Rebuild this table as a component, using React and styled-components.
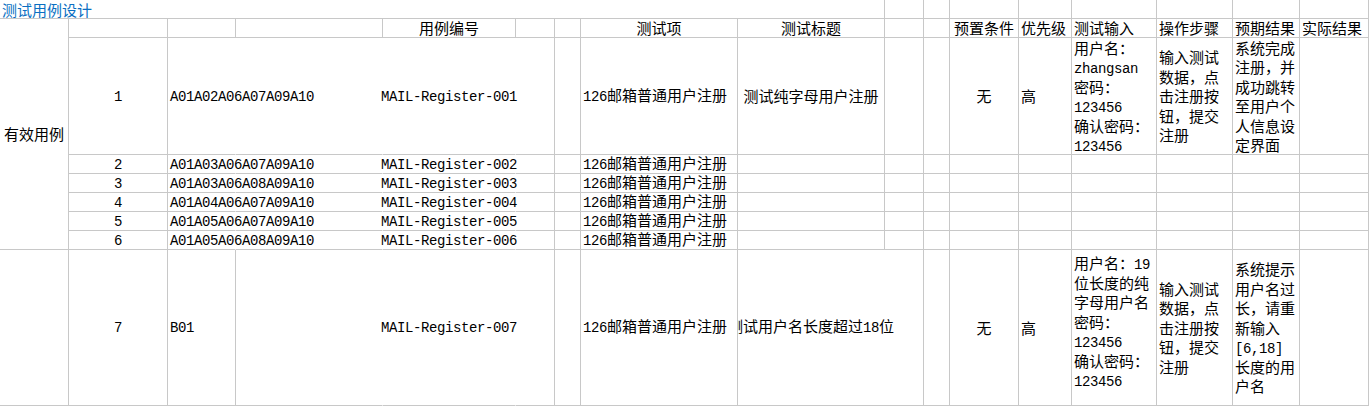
import React from "react";
import styled, { createGlobalStyle } from "styled-components";

const GRID = "#c8c8c8";
const LEFT_W = 69;
// widths of the sheet columns right of the label column, border included
const COLS = [99, 68, 147, 133, 39, 26, 157, 147, 39, 26, 69, 53, 85, 76, 67, 69];

const GlobalStyle = createGlobalStyle`
    body {
        margin: 0;
        background: #ffffff;
        color: #000000;
        font-family: "Noto Sans CJK SC", "Noto Sans", sans-serif;
        font-size: 15px;
    }
`;

const Sheet = styled.div`
    width: 1371px;
    height: 407px;
    overflow: hidden;
`;

const Row = styled.div`
    display: flex;
    height: ${({ $h }) => $h}px;
`;

const Body = styled.div`
    display: flex;
`;

const LabelColumn = styled.div`
    display: flex;
    flex-direction: column;
    width: ${LEFT_W}px;
`;

const Rows = styled.div`
    display: flex;
    flex-direction: column;
`;

const Cell = styled.div`
    box-sizing: border-box;
    flex: none;
    width: ${({ $w }) => $w}px;
    height: ${({ $h }) => ($h ? `${$h}px` : "100%")};
    display: flex;
    align-items: center;
    justify-content: ${({ $center }) => ($center ? "center" : "flex-start")};
    padding: 0 ${({ $pr }) => $pr || 0}px 0
        ${({ $center }) => ($center ? 0 : 2)}px;
    border-right: 1px solid ${({ $open }) => ($open ? "transparent" : GRID)};
    border-bottom: 1px solid ${GRID};
    overflow: ${({ $clip }) => ($clip ? "hidden" : "visible")};
    white-space: nowrap;
    line-height: 19.5px;
`;

const TitleText = styled.span`
    color: #0a6fc2;
    padding-top: 1px;
`;

const Text = styled.span`
    white-space: nowrap;
`;

const Latin = styled.span`
    font-family: "Liberation Mono", "DejaVu Sans Mono", monospace;
    font-size: 14px;
    letter-spacing: -0.4px;
`;

const Lines = styled.div`
    display: flex;
    flex-direction: column;
`;

const Line = styled.div`
    height: 19.5px;
    white-space: nowrap;
`;

const ASCII = /^[\x20-\x7e]+$/;

const T = ({ children }) => (
    <Text>
        {String(children)
            .split(/([\x20-\x7e]+)/)
            .filter(Boolean)
            .map((part, i) =>
                ASCII.test(part) ? (
                    <Latin key={i}>{part}</Latin>
                ) : (
                    <span key={i}>{part}</span>
                )
            )}
    </Text>
);

const Multi = ({ lines }) => (
    <Lines>
        {lines.map((l, i) => (
            <Line key={i}>
                <T>{l}</T>
            </Line>
        ))}
    </Lines>
);

const headers = [
    { t: "" },
    { t: "" },
    { t: "" },
    { t: "用例编号", center: true },
    { t: "" },
    { t: "" },
    { t: "测试项", center: true },
    { t: "测试标题", center: true },
    { t: "" },
    { t: "" },
    { t: "预置条件", center: true },
    { t: "优先级" },
    { t: "测试输入" },
    { t: "操作步骤" },
    { t: "预期结果" },
    { t: "实际结果" },
];

const ITEM = "126邮箱普通用户注册";
const STEPS = ["输入测试", "数据，点", "击注册按", "钮，提交", "注册"];

const cases = [
    {
        h: 117,
        no: "1",
        code: "A01A02A06A07A09A10",
        id: "MAIL-Register-001",
        title: "测试纯字母用户注册",
        pre: "无",
        pri: "高",
        input: ["用户名：", "zhangsan", "密码：", "123456", "确认密码：", "123456"],
        steps: STEPS,
        expect: ["系统完成", "注册，并", "成功跳转", "至用户个", "人信息设", "定界面"],
    },
    { h: 19, no: "2", code: "A01A03A06A07A09A10", id: "MAIL-Register-002" },
    { h: 19, no: "3", code: "A01A03A06A08A09A10", id: "MAIL-Register-003" },
    { h: 19, no: "4", code: "A01A04A06A07A09A10", id: "MAIL-Register-004" },
    { h: 19, no: "5", code: "A01A05A06A07A09A10", id: "MAIL-Register-005" },
    { h: 19, no: "6", code: "A01A05A06A08A09A10", id: "MAIL-Register-006" },
    {
        h: 156,
        no: "7",
        code: "B01",
        id: "MAIL-Register-007",
        title: "测试用户名长度超过18位",
        wideTitle: true,
        pre: "无",
        pri: "高",
        input: ["用户名：19", "位长度的纯", "字母用户名", "密码：", "123456", "确认密码：", "123456"],
        inputShift: -6,
        steps: STEPS,
        expect: ["系统提示", "用户名过", "长，请重", "新输入", "[6,18]", "长度的用", "户名"],
    },
];

const Shifted = styled.div`
    transform: translateY(${({ $dy }) => $dy || 0}px);
`;

const CaseRow = ({ c }) => (
    <Row $h={c.h}>
        <Cell $w={COLS[0]} $center>
            <T>{c.no}</T>
        </Cell>
        <Cell $w={COLS[1]} $open={c.code.length > 8}>
            <T>{c.code}</T>
        </Cell>
        <Cell $w={COLS[2]} $open />
        <Cell $w={COLS[3]} $center $open>
            <T>{c.id}</T>
        </Cell>
        <Cell $w={COLS[4]} />
        <Cell $w={COLS[5]} />
        <Cell $w={COLS[6]}>
            <T>{ITEM}</T>
        </Cell>
        {c.wideTitle ? (
            <Cell $w={COLS[7] + COLS[8]} $pr={COLS[8]} $center $clip>
                <T>{c.title}</T>
            </Cell>
        ) : (
            <>
                <Cell $w={COLS[7]} $center>
                    {c.title && <T>{c.title}</T>}
                </Cell>
                <Cell $w={COLS[8]} />
            </>
        )}
        <Cell $w={COLS[9]} />
        <Cell $w={COLS[10]} $center>
            {c.pre && <T>{c.pre}</T>}
        </Cell>
        <Cell $w={COLS[11]}>{c.pri && <T>{c.pri}</T>}</Cell>
        <Cell $w={COLS[12]}>
            {c.input && (
                <Shifted $dy={c.inputShift}>
                    <Multi lines={c.input} />
                </Shifted>
            )}
        </Cell>
        <Cell $w={COLS[13]}>{c.steps && <Multi lines={c.steps} />}</Cell>
        <Cell $w={COLS[14]}>{c.expect && <Multi lines={c.expect} />}</Cell>
        <Cell $w={COLS[15]} />
    </Row>
);

const titleWidth = LEFT_W + COLS.slice(0, 8).reduce((a, b) => a + b, 0);

export default function App() {
    return (
        <>
            <GlobalStyle />
            <Sheet>
                <Row $h={19}>
                    <Cell $w={titleWidth}>
                        <TitleText>测试用例设计</TitleText>
                    </Cell>
                    {COLS.slice(8).map((w, i) => (
                        <Cell key={i} $w={w} />
                    ))}
                </Row>
                <Body>
                    <LabelColumn>
                        <Cell $w={LEFT_W} $h={231} $center>
                            <T>有效用例</T>
                        </Cell>
                        <Cell $w={LEFT_W} $h={156} />
                    </LabelColumn>
                    <Rows>
                        <Row $h={19}>
                            {headers.map((hd, i) => (
                                <Cell key={i} $w={COLS[i]} $center={hd.center}>
                                    {hd.t && <T>{hd.t}</T>}
                                </Cell>
                            ))}
                        </Row>
                        {cases.map((c) => (
                            <CaseRow key={c.no} c={c} />
                        ))}
                    </Rows>
                </Body>
            </Sheet>
        </>
    );
}
